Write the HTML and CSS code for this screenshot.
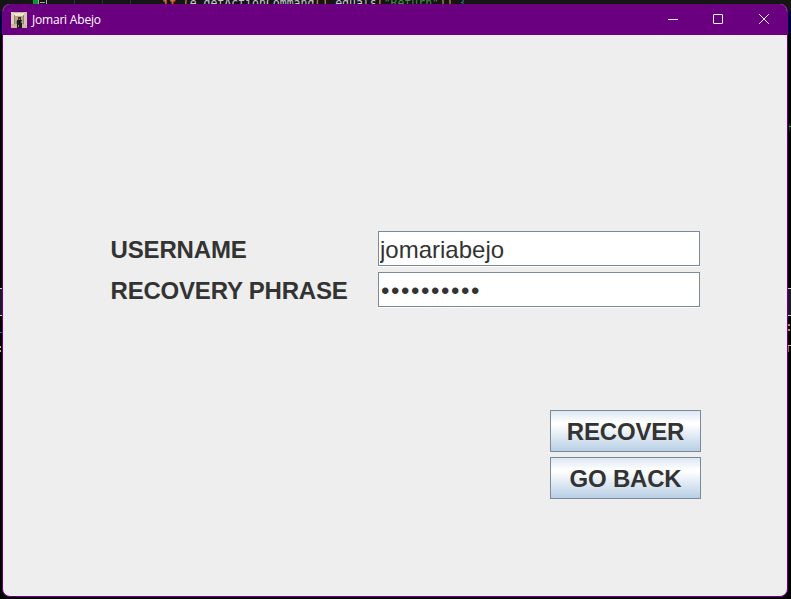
FILE: index.html
```html
<!DOCTYPE html>
<html lang="en">
<head>
<meta charset="utf-8">
<title>Jomari Abejo</title>
<link rel="stylesheet" href="styles.css">
</head>
<body>
<div class="editor" aria-hidden="true">
  <svg class="scene" width="791" height="599" shape-rendering="crispEdges">
    <rect width="791" height="12" fill="#151515"/>
    <rect y="12" width="791" height="21" fill="#02003f"/>
    <rect x="33" width="5" height="5" fill="#08982f"/>
    <path d="M38.500 0v4M46.500 0v4M40 2.500h5" stroke="#aaa"/>
    <path d="M74.500 0v4M102.500 0v4M130.500 0v4" stroke="#293344"/>
    <path d="M0 288.500h3M787 288.500h4M0 315.500h3M787 315.500h4" stroke="#c8c8c8"/>
    <path d="M0 289h3v26H0zM787 289h4v26h-4z" fill="#211630"/>
    <path d="M0 332.500h3" stroke="#0878c8"/>
    <path d="M0 346h1v2H0zM0 350h1v2H0z" fill="#c8b580"/>
    <path d="M788 324h2v2h-2zM788 329h2v2h-2z" fill="#c88665"/>
    <path d="M788 345.500h3" stroke="#bbb"/><path d="M788.500 346v6" stroke="#a55b31"/>
    <path d="M789 124h1v7h-1z" fill="#14351d"/><path d="M789 126.500h2" stroke="#45a64c"/>
  </svg>
  <code class="code"><b>if</b> <i>(</i>e.getActionCommand<i>()</i>.equals<i>(</i><em>"Return"</em><i>))</i> <u>{</u></code>
</div>
<main class="window">
  <header class="titlebar">
    <svg class="app-icon" width="16" height="16" viewBox="0 0 16 16" shape-rendering="crispEdges">
      <rect width="16" height="16" fill="#c4b39b"/>
      <path d="M0 0h3v12H0z" fill="#ded1bd"/><path d="M13 0h3v13h-3z" fill="#d6c7b0"/>
      <path d="M3 1h10v3H3z" fill="#eee4d0"/><path d="M4 4h8v8H4z" fill="#b5a38a"/>
      <path d="M3 3h1v9H3zM12 3h1v9h-1z" fill="#94826a"/>
      <path d="M7 5h3v3H7z" fill="#513429"/><path d="M6 8h5v3H6zM6 11h5v5H6z" fill="#171b23"/>
      <path d="M5 9h1v3H5zM10 9h1v2h-1zM8 7h1v1H8zM7 13h1v2H7z" fill="#b97959"/>
      <path d="M0 13h5v3H0zM11 13h5v3h-5z" fill="#cfbaa0"/>
    </svg>
    <span class="title">Jomari Abejo</span>
    <nav class="controls">
      <svg viewBox="0 0 46 31"><path d="M11 15.500h10" shape-rendering="crispEdges"/></svg>
      <svg viewBox="0 0 46 31"><rect x="10.500" y="10.500" width="9" height="9" rx=".5"/></svg>
      <svg viewBox="0 0 46 31"><path d="m10.200 10.200 9.600 9.600m0-9.600-9.600 9.600"/></svg>
    </nav>
  </header>
  <form class="panel">
    <div class="fields">
      <label for="user">USERNAME</label>
      <input id="user" class="field" type="text" value="jomariabejo">
      <label for="phrase" class="long">RECOVERY PHRASE</label>
      <input id="phrase" class="field dots" type="text" value="••••••••••">
    </div>
    <div class="actions">
      <button type="button">RECOVER</button>
      <button type="button">GO BACK</button>
    </div>
  </form>
</main>
</body>
</html>
```
FILE: styles.css
```css
* { box-sizing: border-box; }
body {
  margin: 0;
  width: 791px;
  height: 599px;
  padding: 4px 3px 2px 2px;
  overflow: hidden;
  background: #000;
  font-family: "Liberation Sans", Arial, sans-serif;
}
.editor { position: absolute; inset: 0; overflow: hidden; }
.scene { display: block; }
.code {
  position: absolute;
  left: 162px;
  top: -4px;
  font: 11.5px/14px "DejaVu Sans Mono", monospace;
  color: #c5cbd3;
  white-space: pre;
}
.code b { color: #d26b36; }
.code i { color: #c79b45; font-style: normal; }
.code em { color: #419344; font-style: normal; }
.code u { color: #267985; text-decoration: none; }
.window {
  position: relative;
  width: 786px;
  height: 593px;
  border: 1px solid #6a0080;
  border-top: 0;
  border-radius: 8px;
  overflow: hidden;
  background: #eee;
}
.titlebar {
  height: 31px;
  display: flex;
  align-items: center;
  padding-left: 8px;
  background: #6a0080;
  color: #fff;
}
.title {
  margin-left: 5px;
  font: 12px/16px "Open Sans", "Noto Sans", sans-serif;
  letter-spacing: -.2px;
}
.controls { display: flex; margin-left: auto; margin-right: -8px; }
.controls svg {
  width: 46px;
  height: 31px;
  fill: none;
  stroke: #fff;
  stroke-width: 1;
}
.panel { padding: 196px 86px 0 107px; }
.fields {
  display: grid;
  grid-template-columns: 268px 322px;
  row-gap: 6px;
  width: 590px;
}
label {
  padding-left: .5px;
  font-weight: bold;
  font-size: 24px;
  line-height: 37px;
  height: 35px;
  letter-spacing: -.15px;
  color: #333;
  white-space: nowrap;
}
.long { letter-spacing: -.2px; }
.field {
  width: 322px;
  height: 35px;
  border: 1px solid #7a8a99;
  border-radius: 0;
  padding: 2px 1px 0;
  background: #fff;
  color: #333;
  font: 24px "Liberation Sans", Arial, sans-serif;
  box-shadow: 0 1px #fff;
  outline: 0;
}
.dots { padding-left: 2px; letter-spacing: 1.6px; }
.actions {
  display: flex;
  flex-direction: column;
  align-items: flex-end;
  gap: 5px;
  margin-top: 103px;
}
button {
  width: 151px;
  height: 42px;
  padding: 2px 0 0;
  border: 1px solid #7a8a99;
  border-radius: 0;
  background: linear-gradient(#dde8f3 0%, #fff 30%, #fff 33%, #b8cfe5 100%);
  color: #333;
  font: bold 24px "Liberation Sans", Arial, sans-serif;
  letter-spacing: -.2px;
}
```
